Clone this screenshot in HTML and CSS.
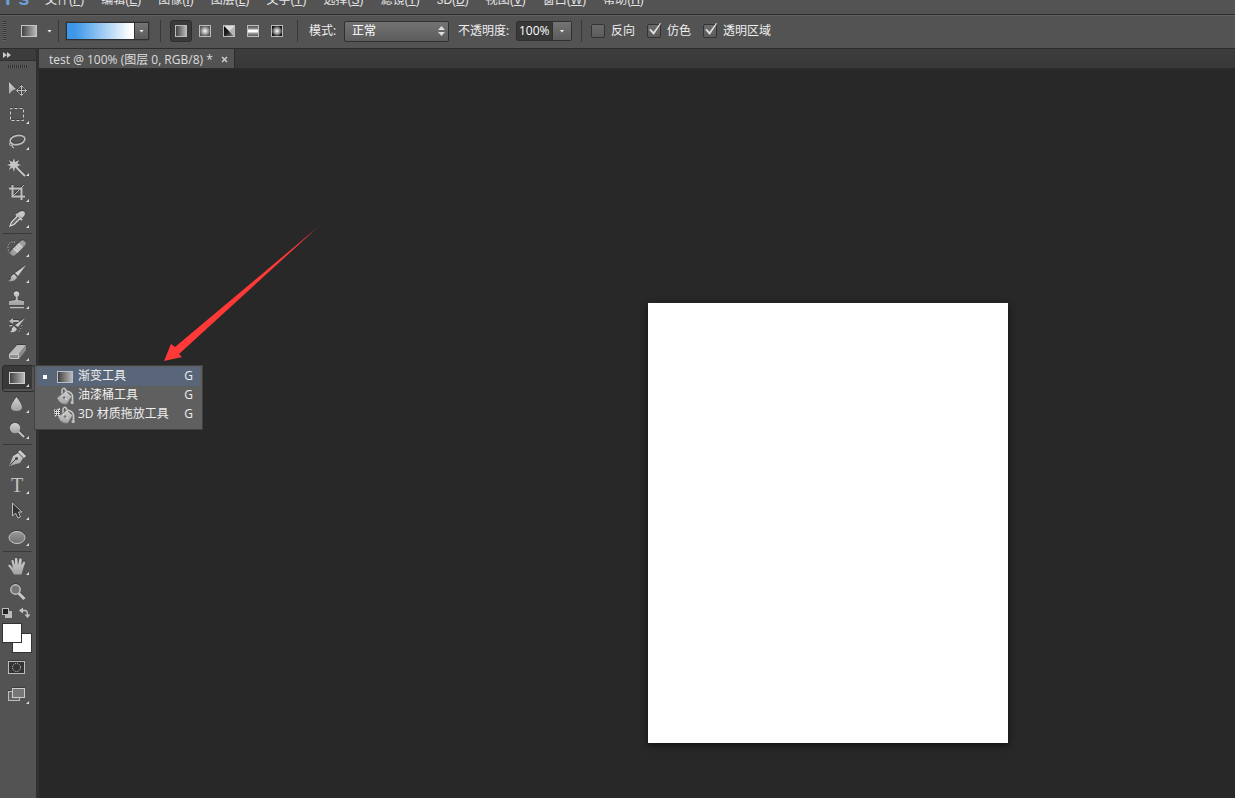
FILE: index.html
```html
<!DOCTYPE html>
<html lang="zh-CN">
<head>
<meta charset="utf-8">
<title>test @ 100%</title>
<link rel="stylesheet" href="styles.css">
</head>
<body>
<svg class="defs" aria-hidden="true">
  <defs>
    <linearGradient id="metal" x1="0" y1="0" x2="0" y2="1"><stop offset="0" stop-color="#d2d2d2"/><stop offset="1" stop-color="#a2a2a2"/></linearGradient>
    <linearGradient id="ramp"><stop offset="0" stop-color="#3e3e3e"/><stop offset="1" stop-color="#bdbdbd"/></linearGradient>
    <linearGradient id="oval" x1="0" y1="0" x2="0" y2="1"><stop offset="0" stop-color="#999"/><stop offset="1" stop-color="#707070"/></linearGradient>
    <radialGradient id="radial"><stop offset="0" stop-color="#fff"/><stop offset="1" stop-color="#555"/></radialGradient>
    <radialGradient id="diamond"><stop offset="0" stop-color="#fff"/><stop offset="0.5" stop-color="#999"/><stop offset="1" stop-color="#222"/></radialGradient>
    <linearGradient id="reflect" x1="0" y1="0" x2="0" y2="1"><stop offset="0" stop-color="#555"/><stop offset="0.25" stop-color="#777"/><stop offset="0.45" stop-color="#fff"/><stop offset="0.55" stop-color="#fff"/><stop offset="0.75" stop-color="#888"/><stop offset="1" stop-color="#555"/></linearGradient>
    <linearGradient id="angle" x1="0" y1="0" x2="1" y2="1"><stop offset="0" stop-color="#000"/><stop offset="0.5" stop-color="#222"/><stop offset="1" stop-color="#888"/></linearGradient>
    <g id="bucket">
      <path d="M5 7V3Q6.500 0 8.500 2.500V9" fill="none" stroke="#c8c8c8" stroke-width="1.500"/>
      <path d="M0 11L9 4L14.500 9.500L10 17Q6 18 2.500 15Z" fill="url(#metal)" stroke="#777" stroke-width="0.700"/>
      <path d="M5 8L10 13" stroke="#e0e0e0"/>
      <circle cx="7" cy="10.500" r="1.300" fill="#777"/>
      <path d="M9 4Q15 5 15.500 9V14" fill="none" stroke="#c9c9c9" stroke-width="1.700"/>
      <circle cx="15.200" cy="15.500" r="1.700" fill="#bbb"/>
    </g>
  </defs>
</svg>
<div class="app">
  <nav class="menubar">
    <span class="logo">Ps</span>
    <a href="#">文件(<u>F</u>)</a>
    <a href="#">编辑(<u>E</u>)</a>
    <a href="#">图像(<u>I</u>)</a>
    <a href="#">图层(<u>L</u>)</a>
    <a href="#">文字(<u>Y</u>)</a>
    <a href="#">选择(<u>S</u>)</a>
    <a href="#">滤镜(<u>T</u>)</a>
    <a href="#">3D(<u>D</u>)</a>
    <a href="#">视图(<u>V</u>)</a>
    <a href="#">窗口(<u>W</u>)</a>
    <a href="#">帮助(<u>H</u>)</a>
  </nav>

  <header class="options">
    <span class="grip"></span>
    <button class="preset" aria-label="渐变工具预设">
      <svg width="16" height="12"><rect x="0.500" y="0.500" width="15" height="11" fill="url(#ramp)" stroke="#c4c4c4"/></svg>
      <span class="caret"></span>
    </button>
    <span class="rule"></span>
    <button class="ramp" aria-label="编辑渐变"><span class="ramp-fill"></span><span class="ramp-drop"><span class="caret"></span></span></button>
    <span class="rule"></span>
    <div class="kinds">
      <button class="kind active" aria-label="线性渐变"><svg width="12" height="12"><rect x="0.500" y="0.500" width="11" height="11" fill="url(#ramp)" stroke="#bbb"/></svg></button>
      <button class="kind" aria-label="径向渐变"><svg width="12" height="12"><rect x="0.500" y="0.500" width="11" height="11" fill="url(#radial)" stroke="#bbb"/></svg></button>
      <button class="kind" aria-label="角度渐变"><svg width="12" height="12"><rect width="12" height="12" fill="#ddd"/><path d="M1 1V11H11L6 6Z" fill="url(#angle)"/><path d="M6 6L11 2V11Z" fill="#b5b5b5"/><path d="M0.500 0.500H11.500V11.500H0.500Z" fill="none" stroke="#bbb"/></svg></button>
      <button class="kind" aria-label="对称渐变"><svg width="12" height="12"><rect x="0.500" y="0.500" width="11" height="11" fill="url(#reflect)" stroke="#bbb"/></svg></button>
      <button class="kind" aria-label="菱形渐变"><svg width="12" height="12"><rect x="0.500" y="0.500" width="11" height="11" fill="url(#diamond)" stroke="#bbb"/><path d="M1 1H4L1 4ZM11 1V4L8 1ZM1 11V8L4 11ZM11 11H8L11 8Z" fill="#111"/></svg></button>
    </div>
    <span class="rule"></span>
    <label class="mode-label" for="mode">模式:</label>
    <span class="mode">
      <select id="mode"><option>正常</option></select>
      <svg width="7" height="10"><path d="M0 4L3.500 0L7 4ZM0 6H7L3.500 10Z" fill="#ddd"/></svg>
    </span>
    <label class="opacity-label" for="opacity">不透明度:</label>
    <span class="opacity"><input id="opacity" type="text" value="100%"><button aria-label="不透明度滑块"><span class="caret"></span></button></span>
    <span class="rule"></span>
    <div class="checks">
      <label><input type="checkbox">反向</label>
      <label><input type="checkbox" checked>仿色</label>
      <label><input type="checkbox" checked>透明区域</label>
    </div>
  </header>

  <div class="body">
    <aside class="toolbar">
      <button class="collapse" aria-label="展开面板"><svg width="8" height="6"><path d="M0 0L4 3L0 6ZM4 0L8 3L4 6Z" fill="#ccc"/></svg></button>
      <div class="tool-grip"></div>
      <div class="tools">
        <button class="tool" aria-label="移动工具"><svg viewBox="0 0 36 26"><path d="M9 6V18L12.500 14.500L16 13Z" fill="url(#metal)"/><path d="M21.500 10V19M17 14.500H26M19.500 11.500L21.500 9.500L23.500 11.500M19.500 17.500L21.500 19.500L23.500 17.500M18.500 12.500L16.500 14.500L18.500 16.500M24.500 12.500L26.500 14.500L24.500 16.500" fill="none" stroke="#bbb"/></svg></button>
        <button class="tool more" aria-label="矩形选框工具"><svg viewBox="0 0 36 26"><rect x="10.500" y="6.500" width="13" height="12" fill="none" stroke="#ccc" stroke-dasharray="3 2" stroke-dashoffset="1"/></svg></button>
        <button class="tool more" aria-label="套索工具"><svg viewBox="0 0 36 26"><ellipse cx="17.500" cy="12" rx="7.500" ry="4.500" transform="rotate(-12 17.500 12)" fill="none" stroke="#bdbdbd" stroke-width="1.700"/><circle cx="11" cy="16" r="1.500" fill="none" stroke="#bdbdbd"/><path d="M12 17Q12 19 14 20" fill="none" stroke="#bdbdbd" stroke-width="1.300"/></svg></button>
        <button class="tool more" aria-label="魔棒工具"><svg viewBox="0 0 36 26"><path d="M14 4L15 8L19 6L17.500 9.500L21 11L17.500 12L19 16L15 13.500L14 18L12.500 13.500L9 16L10.500 12L7 11L10.500 9.500L9 6L12.500 8Z" fill="#c4c4c4"/><path d="M17 14L25 22" stroke="#c4c4c4" stroke-width="2"/></svg></button>
        <button class="tool more" aria-label="裁剪工具"><svg viewBox="0 0 36 26"><path d="M9 8.500H21.500V20M12.500 5V16.500H25" fill="none" stroke="#bfbfbf" stroke-width="2"/><path d="M13 16L24 5" stroke="#bbb"/></svg></button>
        <button class="tool more" aria-label="吸管工具"><svg viewBox="0 0 36 26"><path d="M19 6L22 5Q25 5 25 8L24 10L22 12L17 8Z" fill="#c8c8c8"/><path d="M16 8L22 14" stroke="#c8c8c8" stroke-width="2"/><path d="M17.500 10L11.500 16L10 20L14 18.500L20 12.500" fill="#666" stroke="#ddd" stroke-width="1.200"/></svg></button>
        <hr>
        <button class="tool more" aria-label="污点修复画笔工具"><svg viewBox="0 0 36 26"><path d="M15 7H11Q8 8 8 13T13 20" fill="none" stroke="#ccc" stroke-dasharray="1 1.500"/><g transform="rotate(-45 18 13)"><rect x="8.500" y="10" width="19" height="6" rx="3" fill="#a0a0a0" stroke="#777" stroke-width="0.500"/><rect x="14" y="10" width="8" height="6" fill="#d3d3d3"/><path d="M16 11.500H20M16 14.500H20" stroke="#666" stroke-dasharray="1 2"/></g></svg></button>
        <button class="tool more" aria-label="画笔工具"><svg viewBox="0 0 36 26"><path d="M26 4L18 15L15 12Z" fill="#ccc"/><path d="M14 13L17 16Q16 21 8 20Q11 19 11 16Q12 14 14 13Z" fill="url(#metal)"/></svg></button>
        <button class="tool more" aria-label="仿制图章工具"><svg viewBox="0 0 36 26"><path d="M15.500 13L16 10Q13 8 14 5.500Q16.500 3 19 5.500Q20 8 17.500 10L18 13L24 14V18H9V14Z" fill="url(#metal)"/><path d="M10 20.500H24" stroke="#bbb" stroke-width="1.500"/></svg></button>
        <button class="tool more" aria-label="历史记录画笔工具"><svg viewBox="0 0 36 26"><path d="M25 5L18 14L15 12ZM14 13L17 16Q15 20 10 19Q12 18 12 15Z" fill="#c8c8c8"/><path d="M9 8L13 5V7H17Q20 7 19 9H13V11ZM9 12Q10 15 13 12" fill="#b8b8b8"/><path d="M22 12L21 15L18 20" fill="none" stroke="#aaa" stroke-dasharray="1.500 1.500"/></svg></button>
        <button class="tool more" aria-label="橡皮擦工具"><svg viewBox="0 0 36 26"><path d="M9 15L17 6H26L19 15Z" fill="#b9b9b9"/><path d="M9 15H19V20H11Q9 20 9 18Z" fill="#8d8d8d"/><path d="M19 15L26 6V11L19 20Z" fill="#8d8d8d"/><path d="M9.500 15.500H18.500V19.500H10.500Q9.500 19.500 9.500 18Z" fill="none" stroke="#c8c8c8"/></svg></button>
        <div class="tool-slot">
          <button class="tool more current" aria-label="渐变工具"><svg viewBox="0 0 36 26"><rect x="9.500" y="7.500" width="15" height="11" fill="url(#ramp)" stroke="#ccc"/></svg></button>
          <div class="flyout" role="menu">
            <button class="fly-item selected" role="menuitem"><span class="dot"></span><svg width="22" height="18"><rect x="4.500" y="3.500" width="15" height="11" fill="url(#ramp)" stroke="#b8bec8"/></svg><span class="name">渐变工具</span><kbd>G</kbd></button>
            <button class="fly-item" role="menuitem"><span class="dot"></span><svg width="22" height="18"><use href="#bucket" x="4"/></svg><span class="name">油漆桶工具</span><kbd>G</kbd></button>
            <button class="fly-item" role="menuitem"><span class="dot"></span><svg width="22" height="18"><use href="#bucket" x="5"/><path d="M1 3L3 4L7 2V11L4 9L2 11Z" fill="#ddd"/><path d="M2 4.500H7M2 6.500H7M2 8.500H7" stroke="#333" stroke-dasharray="1 1"/></svg><span class="name">3D 材质拖放工具</span><kbd>G</kbd></button>
          </div>
        </div>
        <button class="tool more" aria-label="模糊工具"><svg viewBox="0 0 36 26"><path d="M16.500 6Q22 13 22 16Q22 20 16.500 20T11 16Q11 13 16.500 6Z" fill="url(#metal)"/></svg></button>
        <button class="tool more" aria-label="减淡工具"><svg viewBox="0 0 36 26"><circle cx="15" cy="11" r="5.200" fill="url(#metal)"/><path d="M18.500 14.500L24 20" stroke="#c4c4c4" stroke-width="2"/></svg></button>
        <hr>
        <button class="tool more" aria-label="钢笔工具"><svg viewBox="0 0 36 26"><path d="M9 20L13 10L18 7L23 12L20 17Z" fill="url(#metal)"/><path d="M19 5L25 11" stroke="#ccc" stroke-width="3"/><path d="M10 19L16 13" stroke="#444"/><circle cx="16.500" cy="12.500" r="1.500" fill="#444"/></svg></button>
        <button class="tool more type-tool" aria-label="横排文字工具"><span>T</span></button>
        <button class="tool more" aria-label="路径选择工具"><svg viewBox="0 0 36 26"><path d="M12.500 5V18L15.500 15L18 20L20.500 19L18.500 14H22Z" fill="#333" stroke="#bdbdbd"/></svg></button>
        <button class="tool more" aria-label="椭圆工具"><svg viewBox="0 0 36 26"><ellipse cx="17" cy="13.500" rx="8" ry="6" fill="url(#oval)" stroke="#c8c8c8"/></svg></button>
        <hr>
        <button class="tool more" aria-label="抓手工具"><svg viewBox="0 0 36 26"><path d="M8 12.500Q9 10.500 11 12.500L13 15L11.500 8Q11.500 6 13.300 7L15 12L15 5.500Q16 4 17.200 5.500L18 12L19.500 5.500Q21 4.500 21.700 6.500L21.500 12L23.500 8.500Q25.500 8 25 10L22.500 18L21.500 21.500H14L12 18Z" fill="url(#metal)"/></svg></button>
        <button class="tool" aria-label="缩放工具"><svg viewBox="0 0 36 26"><path d="M18.500 14L24.500 20" stroke="#c8c8c8" stroke-width="3"/><circle cx="15.500" cy="10.500" r="4.700" fill="#777" stroke="#bebebe" stroke-width="1.500"/></svg></button>
      </div>
      <div class="mini">
        <button aria-label="默认颜色"><svg width="12" height="12"><rect x="4" y="4" width="7" height="7" fill="#bbb"/><rect x="1.500" y="1.500" width="6" height="6" fill="#222" stroke="#bbb"/></svg></button>
        <button aria-label="切换颜色"><svg width="12" height="12"><path d="M3 3.500H6Q8.500 3.500 8.500 8" fill="none" stroke="#c4c4c4" stroke-width="1.300"/><path d="M0 3.500L4 0.500V6.500ZM5.500 7.500H11.500L8.500 11Z" fill="#c4c4c4"/></svg></button>
      </div>
      <div class="swatches">
        <button class="swatch back" aria-label="背景色"></button>
        <button class="swatch front" aria-label="前景色"></button>
      </div>
      <button class="tool" aria-label="快速蒙版"><svg viewBox="0 0 36 26"><rect x="8.500" y="7.500" width="16" height="12" fill="#333" stroke="#bbb"/><circle cx="16.500" cy="13.500" r="4" fill="none" stroke="#ddd" stroke-dasharray="1 1.100"/></svg></button>
      <button class="tool more screen" aria-label="屏幕模式"><svg viewBox="0 0 36 26"><rect x="8.500" y="9.500" width="11" height="9" fill="#666" stroke="#bbb"/><rect x="12.500" y="6.500" width="12" height="9" fill="#777" stroke="#ccc"/></svg></button>
    </aside>

    <main class="workspace">
      <div class="tabs"><div class="tab"><span>test @ 100% (图层 0, RGB/8) *</span><button aria-label="关闭"><svg width="7" height="7"><path d="M1 1L6 6M6 1L1 6" stroke="#ccc" stroke-width="1.500"/></svg></button></div></div>
      <div class="stage">
        <div class="sheet"></div>
        <svg class="arrow" width="156" height="136"><path d="M0 134L7 117L11 120L154 0L15 127L18 130Z" fill="#fe3937"/></svg>
      </div>
    </main>
  </div>
</div>
</body>
</html>
```
FILE: styles.css
```css
* { box-sizing: border-box; }
html, body { height: 100%; }
body {
  margin: 0;
  overflow: hidden;
  background: #282828;
  color: #eee;
  font: 12px/16px "Open Sans", "Noto Sans CJK SC", sans-serif;
}
button { margin: 0; padding: 0; border: 0; background: none; color: inherit; font: inherit; }
svg { display: block; flex: none; }
.defs { position: absolute; width: 0; height: 0; }
.app { display: flex; flex-direction: column; height: 100vh; }

.menubar {
  display: flex;
  align-items: flex-end;
  gap: 17px;
  flex: none;
  height: 14px;
  padding: 0 5px 5px;
  overflow: hidden;
  background: #535353;
  font-family: "Liberation Sans", "Noto Sans CJK SC", sans-serif;
  white-space: nowrap;
}
.menubar a { color: #e4e4e4; text-decoration: none; line-height: 18px; }
.menubar .logo { width: 23px; color: #6c9fd3; font-size: 20px; font-weight: 700; line-height: 21px; }

.options {
  display: flex;
  align-items: center;
  flex: none;
  height: 35px;
  padding-bottom: 1px;
  border-top: 1px solid #2c2c2c;
  border-bottom: 1px solid #2c2c2c;
  background: #535353;
  box-shadow: inset 0 1px #616161;
  white-space: nowrap;
}
.grip { width: 3px; height: 20px; margin: 0 15px 0 3px; background: repeating-linear-gradient(#333 0 1px, #666 1px 2px); }
.preset { display: flex; align-items: center; gap: 10px; }
.caret { width: 5px; height: 3px; background: #eee; clip-path: polygon(0 0, 100% 0, 50% 100%); }
.rule { flex: none; width: 1px; height: 22px; background: #383838; }
.preset + .rule { margin: 0 7px 0 6px; }
.ramp { display: flex; width: 83px; height: 18px; border: 1px solid #303030; box-shadow: 0 0 0 1px #494949; }
.ramp-fill { flex: 1; background: linear-gradient(90deg, #3d97e8 12%, #fff 95%); }
.ramp-drop { display: flex; align-items: center; justify-content: center; width: 14px; border-left: 1px solid #303030; background: linear-gradient(#747474, #5c5c5c); }
.ramp + .rule { margin: 0 9px 0 11px; }
.kinds { display: flex; gap: 2px; }
.kind { display: flex; align-items: center; justify-content: center; width: 22px; height: 22px; border-radius: 3px; }
.kind.active { border: 1px solid #2d2d2d; background: #3a3a3a; }
.kinds + .rule { margin: 0 11px 0 9px; }
.mode-label { width: 35px; }
.mode { display: flex; align-items: center; width: 105px; height: 21px; }
.mode select {
  flex: 1;
  width: 105px;
  height: 21px;
  margin-right: -11px;
  padding: 0 7px;
  appearance: none;
  border: 1px solid #303030;
  border-radius: 2px;
  background: linear-gradient(#737373, #5c5c5c);
  color: #fff;
  font: inherit;
}
.mode svg { margin-right: 4px; pointer-events: none; z-index: 1; }
.opacity-label { width: 58px; margin-left: 9px; }
.opacity { display: flex; width: 56px; height: 20px; border: 1px solid #303030; border-radius: 2px; }
.opacity input { width: 35px; padding: 0 0 0 2px; border: 0; background: #383838; color: #fff; font: inherit; }
.opacity button { display: flex; flex: 1; align-items: center; justify-content: center; border-left: 1px solid #303030; background: linear-gradient(#747474, #5c5c5c); }
.opacity + .rule { margin: 0 9px; }
.checks { display: flex; gap: 12px; }
.checks label { display: flex; align-items: center; gap: 6px; }
.checks input {
  position: relative;
  width: 14px;
  height: 14px;
  margin: 0;
  appearance: none;
  border: 1px solid #333;
  border-radius: 2px;
  background: linear-gradient(#6b6b6b, #5b5b5b);
}
.checks input:checked::after {
  content: "";
  position: absolute;
  left: 1px;
  top: -2px;
  width: 12px;
  height: 12px;
  background: #e0e0e0;
  clip-path: polygon(0 55%, 15% 50%, 38% 72%, 92% 0, 100% 4%, 42% 95%, 35% 95%);
}

.body { display: flex; flex: 1; min-height: 0; }
.toolbar { flex: none; width: 39px; border-right: 3px solid #303030; background: #535353; box-shadow: inset 0 1px #303030; }
.collapse { display: block; width: 100%; height: 12px; padding-left: 3px; border-bottom: 1px solid #303030; background: #3c3c3c; }
.tool-grip { width: 19px; height: 3px; margin: 4px 0 8px 8px; background: repeating-linear-gradient(90deg, #303030 0 1px, #606060 1px 2px); }
.tools hr { width: 29px; height: 1px; margin: 1px 0 1px 3px; border: 0; background: #3a3a3a; }
.tool { display: block; position: relative; width: 36px; height: 26px; }
.tool svg { width: 36px; height: 26px; filter: drop-shadow(0 -1px 0 #3c3c3c); }
.tool.more::after {
  content: "";
  position: absolute;
  left: 26px;
  top: 19px;
  width: 3px;
  height: 3px;
  background: #ddd;
  clip-path: polygon(100% 0, 100% 100%, 0 100%);
}
.tool.current { background: linear-gradient(#393939, #393939) 3px 1px / 29px 23px no-repeat; }
.tool.current::before { content: ""; position: absolute; left: 2px; top: 0; width: 31px; height: 25px; border: 1px solid #2b2b2b; border-radius: 3px; }
.type-tool { padding-right: 2px; color: #c2c2c2; font: 20px/26px "Liberation Serif", serif; }
.screen { margin-top: 2px; }
.tool-slot { position: relative; }
.flyout {
  position: absolute;
  z-index: 5;
  left: 34px;
  top: 0;
  width: 169px;
  padding: 1px 2px 5px;
  border: 1px solid #414141;
  background: #5f5f5f;
}
.fly-item { display: flex; align-items: center; width: 100%; height: 19px; padding: 0 7px 0 6px; text-align: left; white-space: nowrap; }
.fly-item.selected { background: #596679; }
.dot { width: 4px; height: 4px; margin-right: 6px; }
.selected .dot { background: #fff; }
.name { flex: 1; margin-left: 3px; }
.name, .fly-item kbd { padding-bottom: 2px; }
.fly-item kbd { font: inherit; }

.mini { display: flex; justify-content: space-between; align-items: center; height: 16px; padding: 0 5px 0 1px; }
.swatches { position: relative; height: 33px; }
.swatch { position: absolute; width: 20px; height: 20px; border: 1px solid #333; background: #fff; }
.front { left: 2px; top: 2px; }
.back { left: 12px; top: 12px; }

.workspace { display: flex; flex: 1; flex-direction: column; min-width: 0; }
.tabs { display: flex; flex: none; height: 20px; border-bottom: 1px solid #2c2c2c; background: linear-gradient(#3d3d3d, #383838); }
.tab { display: flex; align-items: center; gap: 8px; padding: 2px 6px 0 10px; border-right: 1px solid #2a2a2a; background: #535353; color: #ddd; white-space: nowrap; }
.stage { position: relative; flex: 1; padding: 234px 0 0 609px; overflow: hidden; background: #282828; }
.sheet { width: 360px; height: 440px; background: #fff; box-shadow: 0 2px 7px #111; }
.arrow { position: absolute; left: 125px; top: 158px; }
```
